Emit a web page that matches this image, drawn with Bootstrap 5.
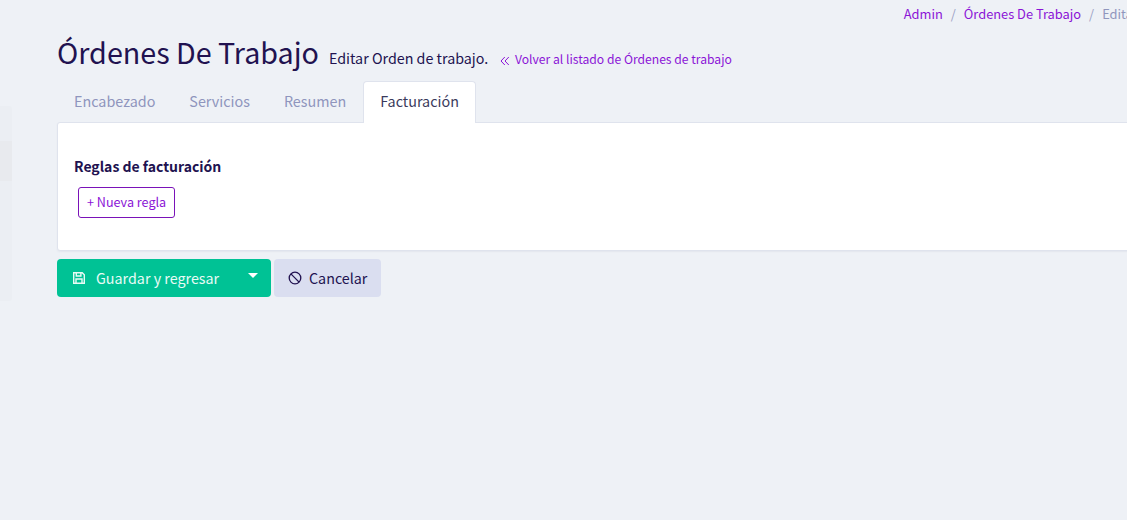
<!DOCTYPE html>
<html lang="es">
<head>
  <meta charset="UTF-8">
  <title>Órdenes De Trabajo</title>
  <link href="https://cdn.jsdelivr.net/npm/bootstrap@5.3.0/dist/css/bootstrap.min.css" rel="stylesheet">
  <style>
    html, body { height: 100%; overflow: hidden; }
    body {
      background-color: #eef1f6;
      color: #211250;
      font-family: "Noto Sans CJK SC", "Noto Sans CJK JP", "Noto Sans", sans-serif;
      font-size: 14.3px;
    }
    a { text-decoration: none; color: #8b14d6; }
    .side-ghost {
      position: absolute; left: 0; top: 106px; width: 12px; height: 195px;
      background: #ebeef3; border-radius: 0 3px 3px 0;
    }
    .side-ghost div { height: 40px; margin-top: 35px; background: #e8eaee; }
    .page-main { width: 1178px; padding-left: 57px; }
    .crumbs { height: 28px; padding-top: 4px; font-size: 12.85px; margin: 0; --bs-breadcrumb-item-active-color: #9096bd; }
    .crumbs .breadcrumb-item + .breadcrumb-item::before { color: #9aa0c4; }
    .page-head { height: 53px; align-items: baseline; }
    .page-head h1 { font-size: 28.7px; font-weight: 400; margin: 0; line-height: 47px; }
    .page-sub { font-size: 14.3px; margin-left: 10px; }
    .back-link { font-size: 12.15px; margin-left: 12px; }
    .back-link svg { margin-right: 2px; }
    .tabs-x { padding: 0; margin-bottom: -1px; position: relative; z-index: 1; }
    .tabs-x .nav-link {
      color: #8f95bd; border: 1px solid transparent; border-bottom: 0;
      padding: 6px 16px; height: 42px; line-height: 25px; font-size: 14.35px; border-radius: 4px 4px 0 0;
    }
    .tabs-x .nav-link.active { background: #fff; color: #3a3a5c; border-color: #dfe3ed; }
    .tab-box { background: #fff; border: 1px solid #dfe3ed; border-radius: 3px; height: 129px; padding: 33px 16px 0; box-shadow: 0 1px 2px rgba(60, 70, 110, .06); }
    .tab-box h6 { font-size: 14px; font-weight: 700; margin: 0 0 11px; line-height: 20px; }
    .btn-rule {
      margin-left: 4px; font-size: 12.6px; padding: 0 8px 3px; height: 31px; line-height: 25px;
      color: #8b14d6; border: 1px solid #7a12b8; border-radius: 3px; background: #fff;
    }
    .foot-bar { margin-top: 8px; gap: 3px; }
    .btn-save {
      background: #00c295; color: #e8fbf5; border: 0; height: 38px; border-radius: 4px; font-size: 14.3px;
      padding: 0 13px 1px 15px; width: 214px; justify-content: space-between;
    }
    .btn-save:hover { background: #00c295; color: #e8fbf5; }
    .save-label { margin-left: 2px; }
    .btn-cancel { background: #dadef0; color: #211250; border: 0; height: 38px; border-radius: 4px; font-size: 14.3px; padding: 0 13px 1px 14px; gap: 7px; width: 107px; }
    .btn-cancel:hover { background: #dadef0; color: #211250; }
    .caret-down { width: 0; height: 0; border-left: 5px solid transparent; border-right: 5px solid transparent; border-top: 5px solid #fff; margin-bottom: 4px; }
  </style>
</head>
<body>
  <div class="side-ghost"><div></div></div>

  <div class="page-main">
    <ol class="breadcrumb crumbs justify-content-end">
      <li class="breadcrumb-item"><a href="#">Admin</a></li>
      <li class="breadcrumb-item"><a href="#">Órdenes De Trabajo</a></li>
      <li class="breadcrumb-item active">Editar Orden</li>
    </ol>

    <div class="d-flex page-head">
      <h1>Órdenes De Trabajo</h1>
      <span class="page-sub">Editar Orden de trabajo.</span>
      <a class="back-link" href="#">
        <svg width="10" height="10" viewBox="0 0 10 10" fill="none" stroke="#8b14d6" stroke-width="1"><path d="M4.8 1 1 5l3.8 4M8.8 1 5 5l3.8 4"/></svg>
        Volver al listado de Órdenes de trabajo
      </a>
    </div>

    <ul class="nav tabs-x">
      <li class="nav-item"><a class="nav-link" href="#">Encabezado</a></li>
      <li class="nav-item"><a class="nav-link" href="#">Servicios</a></li>
      <li class="nav-item"><a class="nav-link" href="#">Resumen</a></li>
      <li class="nav-item"><a class="nav-link active" href="#">Facturación</a></li>
    </ul>

    <div class="tab-box">
      <h6>Reglas de facturación</h6>
      <button type="button" class="btn btn-rule">+ Nueva regla</button>
    </div>

    <div class="d-flex foot-bar">
      <button type="button" class="btn btn-save d-flex align-items-center">
        <span class="d-flex align-items-center gap-2">
          <svg width="14" height="14" viewBox="0 0 14 14" fill="none" stroke="#e8fbf5" stroke-width="1.4"><path d="M2 1.7h8.2L12.3 3.8V12.3H1.7V1.7z"/><path d="M4.3 2v3h4.6V2M4 12V8h6v4"/></svg>
          <span class="save-label">Guardar y regresar</span>
        </span>
        <span class="caret-down"></span>
      </button>
      <button type="button" class="btn btn-cancel d-flex align-items-center">
        <svg width="14" height="14" viewBox="0 0 14 14" fill="none" stroke="#211250" stroke-width="1.3"><circle cx="7" cy="7" r="5.8"/><path d="M2.9 2.9l8.2 8.2"/></svg>
        Cancelar
      </button>
    </div>
  </div>
</body>
</html>
